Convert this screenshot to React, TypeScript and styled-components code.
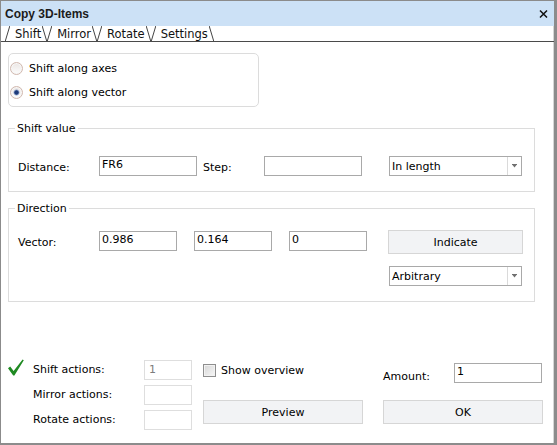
import React from "react";
import styled, { createGlobalStyle } from "styled-components";

const Global = createGlobalStyle`
  html, body { margin: 0; padding: 0; background: #fff; }
  body { font-family: "DejaVu Sans", Verdana, sans-serif; font-size: 11px; color: #000; }
  * { box-sizing: border-box; }
`;

const Window = styled.div`
  width: 557px;
  height: 445px;
  background: #fff;
  border-top: 1px solid #8b8b8b;
  border-left: 1px solid #8b8b8b;
  border-right: 3px solid #8c8c8c;
  border-bottom: 2px solid #8c8c8c;
  box-shadow: inset -1px 0 0 #d6d6d6;
  display: flex;
  flex-direction: column;
  overflow: hidden;
`;

const TitleBar = styled.div`
  height: 25px;
  flex: none;
  background: #cce1f6;
  display: flex;
  align-items: center;
  justify-content: space-between;
  padding: 0 6px 0 4px;
`;

const Title = styled.span`
  font-family: "Liberation Sans", Arial, sans-serif;
  font-weight: bold;
  font-size: 12px;
  color: #1b1b1b;
`;

const CloseIcon = styled.svg`
  width: 9px;
  height: 8px;
  display: block;
`;

const TabStrip = styled.div`
  height: 16px;
  flex: none;
  border-bottom: 1px solid #4a4a4a;
  display: flex;
  align-items: stretch;
  padding-left: 4px;
`;

const Tab = styled.div`
  display: flex;
  align-items: stretch;
  height: 15px;
`;

const TabEdge = styled.svg`
  width: 5px;
  height: 15px;
  display: block;
  flex: none;
`;

const TabLabel = styled.span`
  padding: 0 1px 0 5px;
  line-height: 16px;
  font-size: 11.5px;
  color: #111;
`;

const Content = styled.div`
  flex: 1;
  padding: 11px 0 0 7px;
  display: flex;
  flex-direction: column;
  align-items: flex-start;
`;

const RadioBox = styled.div`
  width: 251px;
  border: 1px solid #dcdcdc;
  border-radius: 5px;
  padding: 8px 0 7px 1px;
  display: flex;
  flex-direction: column;
  gap: 11px;
`;

const RadioRow = styled.label`
  display: flex;
  align-items: center;
  height: 13px;
  gap: 6px;
`;

const RadioCircle = styled.span<{ $checked?: boolean }>`
  width: 13px;
  height: 13px;
  border-radius: 50%;
  border: 1px solid #d1b8ae;
  flex: none;
  background: ${(p) =>
    p.$checked
      ? "radial-gradient(circle, #1d3a78 0 1.8px, #7f95c2 2.4px, rgba(255,255,255,0) 3.4px), linear-gradient(#ebe6e4, #fdfdfd)"
      : "linear-gradient(#ebe6e4, #fdfdfd)"};
  box-shadow: inset 0 0 0 1px #f7f7f7;
`;

const GroupBox = styled.fieldset<{ $mt: number }>`
  width: 527px;
  margin: ${(p) => p.$mt}px 0 0 0;
  padding: 0;
  border: 1px solid #dcdcdc;
  min-inline-size: 0;
`;

const Legend = styled.legend`
  margin-left: 6px;
  padding: 0 2px;
  line-height: 15px;
  font-size: 11px;
`;

const GroupBody = styled.div<{ $pt: number }>`
  padding: ${(p) => p.$pt}px 0 15px 9px;
  display: flex;
  align-items: flex-start;
`;

const FieldLabel = styled.span<{ $w: number; $ml?: number }>`
  width: ${(p) => p.$w}px;
  margin-left: ${(p) => p.$ml ?? 0}px;
  flex: none;
  height: 20px;
  line-height: 23px;
`;

const TextField = styled.input<{ $w: number; $ml?: number }>`
  width: ${(p) => p.$w}px;
  height: 20px;
  margin: 0 0 0 ${(p) => p.$ml ?? 0}px;
  border: 1px solid #a9a9a9;
  padding: 0 2px 3px 2px;
  font-family: "DejaVu Sans", Verdana, sans-serif;
  font-size: 11px;
  color: #000;
  background: #fff;
  outline: none;
  flex: none;
`;

const Combo = styled.div<{ $ml?: number }>`
  width: 133px;
  height: 20px;
  margin-left: ${(p) => p.$ml ?? 0}px;
  border: 1px solid #a9a9a9;
  display: flex;
  align-items: stretch;
  flex: none;
  background: #fff;
`;

const ComboText = styled.span`
  flex: 1;
  padding-left: 2px;
  line-height: 19px;
`;

const ComboArrow = styled.span`
  width: 14px;
  border-left: 1px solid #dadada;
  display: flex;
  align-items: center;
  justify-content: center;
`;

const Button = styled.button<{ $w: number }>`
  width: ${(p) => p.$w}px;
  height: 24px;
  margin: 0;
  padding: 0;
  border: 1px solid #d6d6d6;
  background: #f2f3f5;
  font-family: "DejaVu Sans", Verdana, sans-serif;
  font-size: 11px;
  color: #000;
  flex: none;
`;

const VectorGroup = styled.div`
  display: flex;
  align-items: flex-start;
  padding-top: 1px;
`;

const RightColumn = styled.div`
  margin-left: 21px;
  display: flex;
  flex-direction: column;
  align-items: flex-start;
  gap: 12px;
`;

const ComboIndent = styled.div`
  padding-left: 1px;
`;

const Footer = styled.div`
  margin-top: 58px;
  display: flex;
  align-items: flex-start;
`;

const ActionGrid = styled.div`
  display: grid;
  grid-template-columns: 25px 111px 48px;
  grid-auto-rows: 20px;
  row-gap: 5px;
  align-items: center;
`;

const CheckIcon = styled.svg`
  width: 16px;
  height: 17px;
  display: block;
  align-self: start;
  margin-top: -1px;
`;

const ActionLabel = styled.span`
  grid-column: 2;
  line-height: 20px;
`;

const ActionBox = styled.div`
  grid-column: 3;
  height: 20px;
  border: 1px solid #dedede;
  color: #7c7c7c;
  padding-left: 4px;
  line-height: 17px;
`;

const MidColumn = styled.div`
  margin-left: 11px;
  width: 160px;
  display: flex;
  flex-direction: column;
  padding-top: 4px;
  gap: 23px;
`;

const CheckRow = styled.label`
  display: flex;
  align-items: center;
  height: 13px;
  gap: 5px;
`;

const CheckBox = styled.span`
  width: 13px;
  height: 13px;
  border: 1px solid #8e8e8e;
  background: linear-gradient(135deg, #d6d6d6, #f7f7f7);
  box-shadow: inset 0 0 0 1px #f2f2f2;
  flex: none;
`;

const RightBlock = styled.div`
  margin-left: 20px;
  width: 160px;
  display: flex;
  flex-direction: column;
  padding-top: 3px;
  gap: 17px;
`;

const AmountRow = styled.div`
  display: flex;
  align-items: center;
  height: 20px;
`;

const AmountLabel = styled.span`
  width: 71px;
  line-height: 27px;
  align-self: flex-start;
`;

const TabItem = ({ label }: { label: string }) => (
  <Tab>
    <TabEdge viewBox="0 0 5 15">
      <line x1="0.3" y1="15" x2="4.8" y2="0" stroke="#444" strokeWidth="1" />
    </TabEdge>
    <TabLabel>{label}</TabLabel>
    <TabEdge viewBox="0 0 5 15">
      <line x1="0.2" y1="0" x2="4.7" y2="15" stroke="#444" strokeWidth="1" />
    </TabEdge>
  </Tab>
);

const Arrow = () => (
  <svg width="5" height="4" viewBox="0 0 5 4">
    <path d="M0 0 H5 V1 H0 Z M0.5 1 H4.5 L2.5 3.5 Z" fill="#707070" />
  </svg>
);

export default function App() {
  return (
    <>
      <Global />
      <Window>
        <TitleBar>
          <Title>Copy 3D-Items</Title>
          <CloseIcon viewBox="0 0 9 8">
            <path d="M1 0.5 L8 7.5 M8 0.5 L1 7.5" stroke="#111" strokeWidth="1.5" />
          </CloseIcon>
        </TitleBar>
        <TabStrip>
          <TabItem label="Shift" />
          <TabItem label="Mirror" />
          <TabItem label="Rotate" />
          <TabItem label="Settings" />
        </TabStrip>
        <Content>
          <RadioBox>
            <RadioRow>
              <RadioCircle />
              <span>Shift along axes</span>
            </RadioRow>
            <RadioRow>
              <RadioCircle $checked />
              <span>Shift along vector</span>
            </RadioRow>
          </RadioBox>

          <GroupBox $mt={14}>
            <Legend>Shift value</Legend>
            <GroupBody $pt={20}>
              <FieldLabel $w={81}>Distance:</FieldLabel>
              <TextField $w={98} defaultValue="FR6" readOnly />
              <FieldLabel $w={61} $ml={6}>Step:</FieldLabel>
              <TextField $w={98} defaultValue="" readOnly />
              <Combo $ml={27}>
                <ComboText>In length</ComboText>
                <ComboArrow>
                  <Arrow />
                </ComboArrow>
              </Combo>
            </GroupBody>
          </GroupBox>

          <GroupBox $mt={9}>
            <Legend>Direction</Legend>
            <GroupBody $pt={14}>
              <VectorGroup>
                <FieldLabel $w={81}>Vector:</FieldLabel>
                <TextField $w={78} defaultValue="0.986" readOnly />
                <TextField $w={78} $ml={17} defaultValue="0.164" readOnly />
                <TextField $w={78} $ml={17} defaultValue="0" readOnly />
              </VectorGroup>
              <RightColumn>
                <Button $w={135}>Indicate</Button>
                <ComboIndent>
                  <Combo>
                    <ComboText>Arbitrary</ComboText>
                    <ComboArrow>
                      <Arrow />
                    </ComboArrow>
                  </Combo>
                </ComboIndent>
              </RightColumn>
            </GroupBody>
          </GroupBox>

          <Footer>
            <ActionGrid>
              <CheckIcon viewBox="0 0 16 17">
                <path
                  d="M0 9.2 L2.2 7.6 L5.6 12 L14.6 0.4 L15.8 1.3 L6.4 16.6 L5.2 16.6 Z"
                  fill="#1f8a22"
                />
              </CheckIcon>
              <ActionLabel>Shift actions:</ActionLabel>
              <ActionBox>1</ActionBox>
              <ActionLabel>Mirror actions:</ActionLabel>
              <ActionBox />
              <ActionLabel>Rotate actions:</ActionLabel>
              <ActionBox />
            </ActionGrid>
            <MidColumn>
              <CheckRow>
                <CheckBox />
                <span>Show overview</span>
              </CheckRow>
              <Button $w={160}>Preview</Button>
            </MidColumn>
            <RightBlock>
              <AmountRow>
                <AmountLabel>Amount:</AmountLabel>
                <TextField $w={88} defaultValue="1" readOnly />
              </AmountRow>
              <Button $w={160}>OK</Button>
            </RightBlock>
          </Footer>
        </Content>
      </Window>
    </>
  );
}
